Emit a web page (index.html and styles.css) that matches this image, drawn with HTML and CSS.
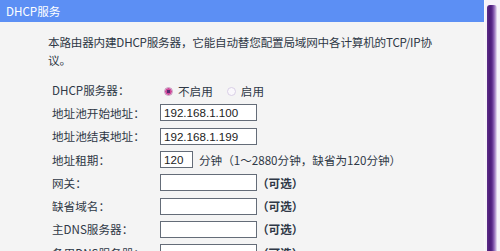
FILE: index.html
```html
<!DOCTYPE html>
<html lang="zh-CN">
<head>
    <meta charset="UTF-8">
    <title>DHCP服务</title>
    <link rel="stylesheet" href="styles.css">
</head>
<body>
    <div class="frame">
        <div class="panel">
            <div class="title-bar">DHCP服务</div>
            <p class="intro">本路由器内建DHCP服务器，它能自动替您配置局域网中各计算机的TCP/IP协议。</p>

            <div class="form">
                <div class="label">DHCP服务器：</div>
                <div class="field">
                    <span class="radio checked"></span><span class="radio-text">不启用</span>
                    <span class="radio"></span><span class="radio-text">启用</span>
                </div>

                <div class="label">地址池开始地址：</div>
                <div class="field"><span class="input">192.168.1.100</span></div>

                <div class="label">地址池结束地址：</div>
                <div class="field"><span class="input">192.168.1.199</span></div>

                <div class="label">地址租期：</div>
                <div class="field"><span class="input short">120</span><span class="note">分钟（1～2880分钟，缺省为120分钟）</span></div>

                <div class="label">网关：</div>
                <div class="field"><span class="input"></span><span class="optional">（可选）</span></div>

                <div class="label">缺省域名：</div>
                <div class="field"><span class="input"></span><span class="optional">（可选）</span></div>

                <div class="label">主DNS服务器：</div>
                <div class="field"><span class="input"></span><span class="optional">（可选）</span></div>

                <div class="label">备用DNS服务器：</div>
                <div class="field"><span class="input"></span><span class="optional">（可选）</span></div>
            </div>
        </div>
        <div class="edge"><div class="edge-bar"></div></div>
    </div>
</body>
</html>
```

FILE: styles.css
```css
body {
    margin: 0;
    padding: 0;
    width: 500px;
    height: 251px;
    overflow: hidden;
    background: #f4f4f4;
    font-family: "Noto Sans CJK SC", "Liberation Sans", sans-serif;
    font-size: 11.6px;
    color: #2f3846;
}

.frame {
    display: flex;
    height: 251px;
}

.panel {
    width: 485px;
    background: #f4f4f4;
}

.title-bar {
    height: 22px;
    line-height: 22px;
    padding-left: 6px;
    background: #5c8ff4;
    color: #fff;
}

.intro {
    margin: 0;
    padding: 11px 0 0 48px;
    width: 398px;
    line-height: 18px;
    letter-spacing: -0.2px;
}

.form {
    display: grid;
    grid-template-columns: 108px auto;
    grid-auto-rows: 23.3px;
    margin-top: 9px;
    padding-left: 52px;
}

.label, .field {
    display: flex;
    align-items: center;
    white-space: nowrap;
}

.radio {
    width: 7px;
    height: 7px;
    border-radius: 50%;
    border: 1px solid #d9cfe6;
    background: #faf8fc;
    margin: 3px 5px 0 4px;
}

.radio.checked {
    background: radial-gradient(circle, #5a2a70 0 1.5px, #d04a9a 2px 3px, #e8b8d8 3.5px);
    border-color: #c89ac0;
}

.radio-text {
    margin-top: 3px;
    margin-right: 10px;
}

.input {
    box-sizing: border-box;
    width: 97px;
    height: 17px;
    border: 1px solid #646c78;
    background: #fff;
    padding-left: 3px;
    font-family: "Liberation Sans", sans-serif;
    font-size: 11.6px;
    line-height: 15px;
    color: #222;
}

.input.short {
    width: 33px;
}

.note {
    margin-left: 6px;
}

.optional {
    font-weight: bold;
}

.edge {
    width: 15px;
    background: #f6f2f9;
    border-left: 1px solid #fafafa;
}

.edge-bar {
    margin-top: 5px;
    margin-left: 2px;
    width: 10px;
    height: 246px;
    border-radius: 3px 3px 0 0;
    background: linear-gradient(to right, #5b2c86 0, #4a1a78 3px, #5a2a88 5px, #8c62b4 7px, #c8b2dc 9px, #efe8f5 10px);
}
```
